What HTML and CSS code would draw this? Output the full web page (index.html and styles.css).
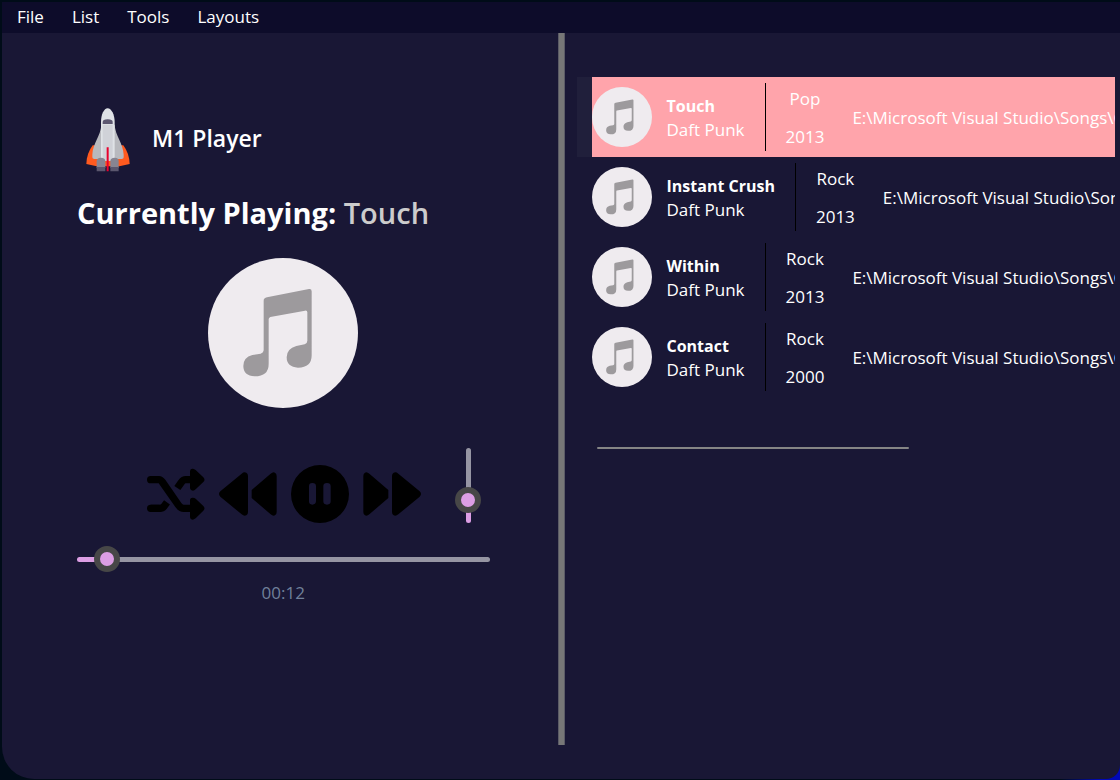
FILE: index.html
```html
<!DOCTYPE html>
<html lang="en">
<head>
<meta charset="UTF-8">
<title>M1 Player</title>
<link rel="stylesheet" href="styles.css">
</head>

<body>

<!-- SHARED ICONS -->
<svg class="defs" aria-hidden="true">
 <symbol id="note" viewBox="0 0 450 450">
  <circle cx="225" cy="225" r="225" fill="#efebef"/>
  <path fill="#9d9a9d" d="M177 118L303 93Q311 92 311 100V292Q311 329 270 329Q236 327 236 298Q236 272 265 264L290 259Q298 256 298 248V163Q298 157 291 158L187 177Q182 179 182 184V318Q182 355 140 355Q106 353 106 324Q106 298 133 291L158 287Q167 284 167 277V128Q167 120 177 118Z"/>
 </symbol>
 <symbol id="rewind" viewBox="0 0 174 174">
  <path d="M4 79L68 26Q75 20 82 23Q87 25 87 33V141Q87 149 82 151Q75 154 68 148L4 95Q-4 87 4 79Z"/>
  <path d="M98 75L154 27Q162 20 168 23Q173 25 173 33V141Q173 149 168 151Q162 154 154 147L98 99Z"/>
 </symbol>
</svg>

<div class="window">

 <nav class="menubar">
  <button>File</button>
  <button>List</button>
  <button>Tools</button>
  <button>Layouts</button>
 </nav>

 <main class="panes">

  <!-- PLAYER -->
  <section class="player">
   <header class="brand">
    <svg class="rocket" viewBox="0 0 132 192" aria-hidden="true">
     <path d="M20 112Q2 136 1 168L32 175H100L131 168Q130 136 112 112Z" fill="#ff5a1f"/>
     <path d="M46 50C44 84 20 106 19 140V148Q19 153 25 153H107Q113 153 113 148V140C112 106 88 84 86 50Z" fill="#b8b9be"/>
     <path d="M45 158V42C45 20 54 1 65 1S86 20 86 42V158Z" fill="#dfe2e6"/>
     <path d="M50 158V50H80V158Z" fill="#d0d2d8"/>
     <path d="M50 48V42Q50 34 65 34T80 42V48Z" fill="#5c5770"/>
     <path d="M32 180V160Q32 149 45 149T58 160V180ZM73 180V160Q73 149 86 149T98 160V180Z" fill="#878592"/>
     <path d="M32 177H58V190H32ZM73 177H98V190H73Z" fill="#5b576e"/>
     <path d="M62 118H68V190H62Z" fill="#e8002d"/>
    </svg>
    <h1>M1 Player</h1>
   </header>

   <h2 class="playing">Currently Playing: <span>Touch</span></h2>

   <svg class="disc"><use href="#note"/></svg>

   <div class="controls">
    <div class="buttons">
     <button aria-label="Shuffle">
      <svg viewBox="0 0 174 174">
       <g fill="none" stroke="#000" stroke-width="22" stroke-linejoin="round">
        <path d="M11 44H36Q41 44 46 51L94 120Q101 130 110 130H134" stroke-linecap="round"/>
        <path d="M11 130H39Q46 130 51 124L60 112"/>
        <path d="M11 130H36" stroke-linecap="round"/>
        <path d="M91 69L103 52Q109 44 116 44H134"/>
       </g>
       <path d="M129 18Q130 10 138 11Q142 12 146 15L169 37Q176 44 169 51L146 73Q142 77 138 77Q130 77 129 70ZM129 104Q130 97 138 98Q142 98 146 101L169 123Q176 130 169 137L146 160Q142 163 138 164Q130 164 129 156Z"/>
      </svg>
     </button>
     <button aria-label="Previous"><svg><use href="#rewind"/></svg></button>
     <button aria-label="Pause">
      <svg viewBox="0 0 174 174">
       <path fill-rule="evenodd" d="M87 0A87 87 0 0 1 87 174A87 87 0 0 1 87 0ZM64 54Q54 54 54 64V109Q54 119 64 119T75 109V64Q75 54 64 54ZM108 54Q97 54 97 64V109Q97 119 108 119T119 109V64Q119 54 108 54Z"/>
      </svg>
     </button>
     <button aria-label="Next" class="next"><svg><use href="#rewind"/></svg></button>
    </div>
    <input class="volume" type="range" min="0" max="100" value="20" aria-label="Volume">
   </div>

   <input class="seek" type="range" min="0" max="270" value="12" aria-label="Position">
   <time class="elapsed">00:12</time>
  </section>

  <div class="splitter" role="separator"></div>

  <!-- SONG LIST -->
  <section class="library">
   <ul class="songs">
    <li class="selected">
     <div class="song">
      <svg class="cover"><use href="#note"/></svg>
      <div class="name"><strong>Touch</strong><span>Daft Punk</span></div>
      <div class="meta"><span>Pop</span><span>2013</span></div>
      <div class="path">E:\Microsoft Visual Studio\Songs\Contents</div>
     </div>
    </li>
    <li>
     <div class="song">
      <svg class="cover"><use href="#note"/></svg>
      <div class="name"><strong>Instant Crush</strong><span>Daft Punk</span></div>
      <div class="meta"><span>Rock</span><span>2013</span></div>
      <div class="path">E:\Microsoft Visual Studio\Songs\Contents</div>
     </div>
    </li>
    <li>
     <div class="song">
      <svg class="cover"><use href="#note"/></svg>
      <div class="name"><strong>Within</strong><span>Daft Punk</span></div>
      <div class="meta"><span>Rock</span><span>2013</span></div>
      <div class="path">E:\Microsoft Visual Studio\Songs\Contents</div>
     </div>
    </li>
    <li>
     <div class="song">
      <svg class="cover"><use href="#note"/></svg>
      <div class="name"><strong>Contact</strong><span>Daft Punk</span></div>
      <div class="meta"><span>Rock</span><span>2000</span></div>
      <div class="path">E:\Microsoft Visual Studio\Songs\Contents</div>
     </div>
    </li>
   </ul>
   <div class="scroll"></div>
  </section>

 </main>
</div>

</body>
</html>
```
FILE: styles.css
```css
*{
 box-sizing:border-box;
}

body{
 margin:0;
 height:100vh;
 padding:2px 0 1px 2px;
 background:radial-gradient(circle at 100% 100%, #0008b8 20px, #000c18 60px);
 color:white;
 font-family:"Segoe UI", "Open Sans", "Noto Sans", sans-serif;
 font-size:17px;
 line-height:24px;
 overflow:hidden;
}

button{
 background:none;
 border:none;
 padding:0;
 color:inherit;
 font:inherit;
 cursor:pointer;
}

.defs{
 position:absolute;
 width:0;
 height:0;
}

.window{
 height:100%;
 display:flex;
 flex-direction:column;
 background:#191735;
 border-radius:0 0 14px 32px;
 overflow:hidden;
}

/* MENU */
.menubar{
 display:flex;
 height:31px;
 padding-left:1px;
 background:#0d0c2a;
}

.menubar button{
 padding:0 14px 2px;
}

.panes{
 flex:1;
 display:grid;
 grid-template-columns:minmax(0,1fr) 7px minmax(0,1fr);
 padding-bottom:34px;
}

.splitter{
 background:#777;
 border:solid #5b5b66;
 border-width:0 1px;
}

/* PLAYER */
.player{
 display:flex;
 flex-direction:column;
 padding:75px 68px 0 75px;
}

.brand{
 display:flex;
 align-items:center;
 gap:22px;
 padding-left:9px;
}

.rocket{
 width:44px;
 height:64px;
}

h1{
 margin:0;
 padding-bottom:4px;
 font-size:23px;
 line-height:32px;
 font-weight:600;
}

.playing{
 margin:20px 0 24px;
 font-size:29px;
 line-height:42px;
 font-weight:700;
 white-space:nowrap;
}

.playing span{
 color:#ccc;
 font-weight:600;
}

.disc{
 align-self:center;
 width:150px;
 height:150px;
}

.controls{
 display:grid;
 grid-template-columns:1fr auto 1fr;
 align-items:center;
 margin-top:39px;
}

.buttons{
 grid-column:2;
 display:flex;
 gap:14px;
 padding:18px 0 0 2px;
}

.buttons button,
.buttons svg{
 display:block;
 width:58px;
 height:58px;
}

.next svg{
 transform:scaleX(-1);
}

/* SLIDERS */
input[type=range]{
 -webkit-appearance:none;
 appearance:none;
 background:none;
}

input[type=range]::-webkit-slider-runnable-track{
 border-radius:3px;
}

input[type=range]::-webkit-slider-thumb{
 -webkit-appearance:none;
 width:26px;
 height:26px;
 border:6px solid #474747;
 border-radius:50%;
 background:#dc9ee4;
}

.seek{
 width:100%;
 height:26px;
 margin:23px 0 0;
}

.seek::-webkit-slider-runnable-track{
 height:5px;
 background:linear-gradient(90deg, #dc9ee4 7%, #9695a3 7%);
}

.seek::-webkit-slider-thumb{
 margin-top:-11px;
}

.volume{
 justify-self:end;
 width:26px;
 height:75px;
 margin:0 8px 0 0;
 writing-mode:vertical-lr;
 direction:rtl;
}

.volume::-webkit-slider-runnable-track{
 width:5px;
 background:linear-gradient(0deg, #dc9ee4 30%, #9695a3 30%);
}

.volume::-webkit-slider-thumb{
 margin-left:-11px;
}

.elapsed{
 margin-top:9px;
 text-align:center;
 color:#70809a;
}

/* SONG LIST */
.library{
 padding:44px 5px 0 12px;
}

.songs{
 margin:0;
 padding:0;
 list-style:none;
 overflow:hidden;
}

.songs li{
 padding-left:15px;
}

.songs .selected{
 background:#201f3b;
}

.song{
 display:flex;
 align-items:center;
 height:80px;
 white-space:nowrap;
 overflow:hidden;
}

.selected .song{
 background:#ffa4ab;
}

.cover{
 flex:none;
 width:60px;
 height:60px;
}

.name{
 display:flex;
 flex-direction:column;
 justify-content:center;
 height:68px;
 padding:2px 20px 0 15px;
 border-right:1px solid black;
}

.name strong{
 font-size:16px;
}

.meta{
 display:flex;
 flex-direction:column;
 gap:14px;
 padding:2px 28px 0 20px;
 text-align:center;
}

.path{
 padding-top:2px;
}

.scroll{
 width:312px;
 height:2px;
 margin:50px 0 0 20px;
 border-radius:2px;
 background:#858585;
}
```
